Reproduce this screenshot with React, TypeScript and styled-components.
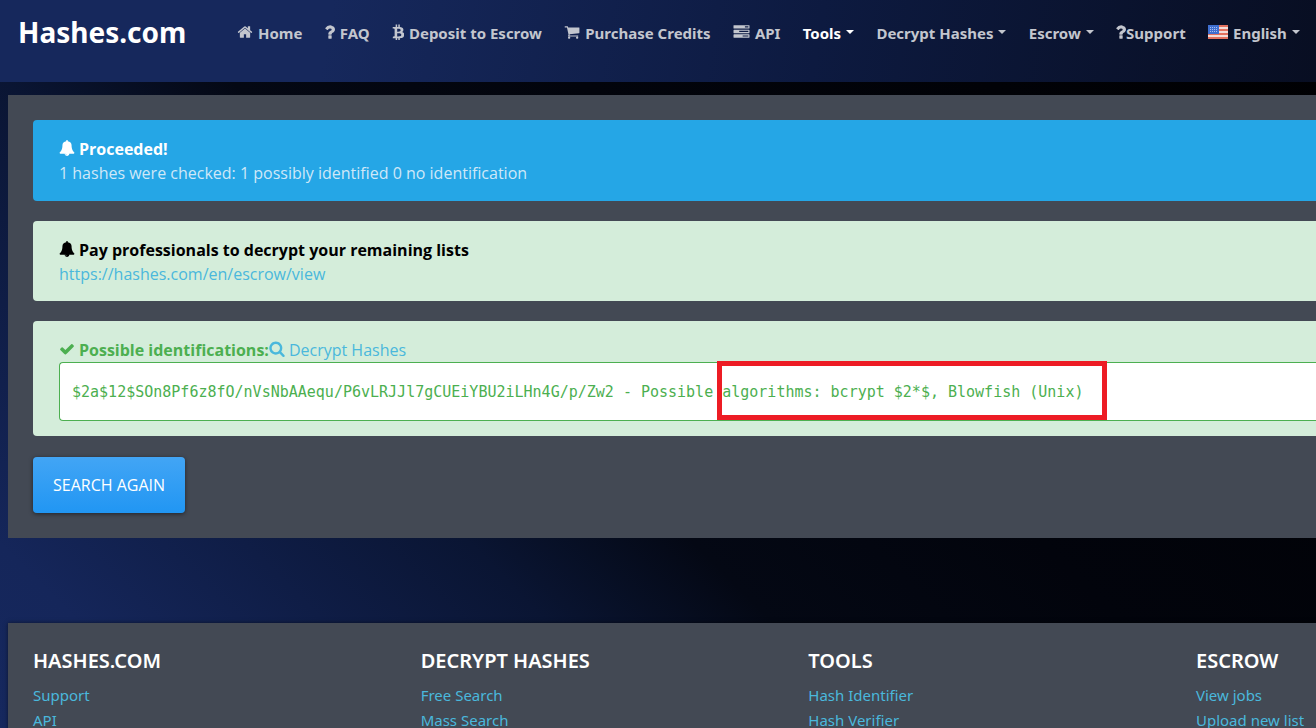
import React from "react";
import styled, { createGlobalStyle } from "styled-components";

const GlobalStyle = createGlobalStyle`
  * { box-sizing: border-box; }
  html { background: #02040b; }
  body {
    margin: 0;
    height: 100vh;
    overflow: hidden;
    font-family: "Noto Sans", "Open Sans", sans-serif;
    font-size: 15px;
    line-height: 24px;
    color: #cfe8f8;
    background: linear-gradient(45deg, #16285e 0%, #15265a 9%, #0f1d46 21%, #0a1533 32%, #040814 43%, #02040c 60%, #000002 100%);
  }
  a { color: #4ab8dc; text-decoration: none; }
`;

const Header = styled.header`
  display: flex;
  align-items: flex-start;
  height: 82px;
  padding: 8px 16px 0 18px;
  background: linear-gradient(100deg, #16285c 0%, #16285c 25%, #0d1a40 62%, #080e22 100%);
`;

const Brand = styled.a`
  && { color: #fff; }
  flex: none;
  width: 219px;
  font-size: 28px;
  font-weight: 700;
  line-height: 48px;
`;

const Nav = styled.nav`
  display: flex;
  flex: 1;
  justify-content: space-between;
  padding-top: 13px;
`;

const NavLink = styled.a<{ $active?: boolean; $tight?: boolean }>`
  && { color: ${(p) => (p.$active ? "#fff" : "#c3c6ce")}; }
  display: flex;
  align-items: center;
  gap: ${(p) => (p.$tight ? "0" : "5px")};
  font-weight: 700;
  white-space: nowrap;
`;

const Caret = styled.span`
  margin-bottom: 2px;
  border: 4px solid transparent;
  border-top-color: currentColor;
  border-bottom: 0;
`;

const Glyph = styled.svg`
  flex: none;
  height: 16px;
  margin-bottom: 2px;
  fill: currentColor;
`;

const FlagImage = styled.svg`
  flex: none;
  width: 20px;
  height: 14px;
  margin-bottom: 2px;
`;

const Panel = styled.main`
  margin: 13px 0 0 8px;
  padding: 25px 0 25px 25px;
  background: #434954;
`;

const Alert = styled.section<{ $tone: "info" | "success" }>`
  margin-bottom: 20px;
  padding: ${(p) => (p.$tone === "info" ? "17px 0 16px 26px" : "17px 0 15px 26px")};
  border-radius: 4px 0 0 4px;
  background: ${(p) => (p.$tone === "info" ? "#25a6e6" : "#d4edda")};
  font-family: "Open Sans", sans-serif;
  font-size: 16px;
`;

const AlertTitle = styled.h2<{ $color: string }>`
  display: flex;
  align-items: center;
  margin: 0;
  color: ${(p) => p.$color};
  font-size: 16px;
  font-weight: 700;
  line-height: 24px;
  svg { margin-right: 4px; }
  a { display: flex; align-items: center; font-weight: 400; }
`;

const AlertText = styled.p`
  margin: 0;
`;

const Result = styled.div`
  position: relative;
  height: 59px;
  padding: 0 12px;
  border: 1px solid #4caf50;
  border-right: 0;
  border-radius: 4px 0 0 4px;
  background: #fff;
  color: #4caf50;
  font-family: "DejaVu Sans Mono", monospace;
  font-size: 15px;
  line-height: 59px;
  white-space: pre;
`;

const Marker = styled.span`
  position: absolute;
  top: -2px;
  left: 657px;
  width: 390px;
  height: 59px;
  border: 5px solid #ed1c24;
`;

const SearchButton = styled.button`
  display: block;
  height: 56px;
  margin-top: 21px;
  padding: 0 20px;
  border: 0;
  border-radius: 4px;
  background: linear-gradient(#42a5f5, #2196f3);
  box-shadow: 0 1px 4px rgba(0, 0, 0, 0.5);
  color: #fff;
  font: 400 16px/24px "Open Sans", sans-serif;
`;

const Footer = styled.footer`
  display: grid;
  grid-template-columns: repeat(3, 1fr) 120px;
  margin: 85px 0 0 8px;
  padding: 25px 0 25px 25px;
  background: #434954;
  box-shadow: 0 0 4px rgba(0, 0, 0, 0.5);
`;

const FooterTitle = styled.h3`
  margin: 0 0 10px;
  color: #fff;
  font-size: 20px;
  font-weight: 600;
  line-height: 25px;
  white-space: nowrap;
`;

const FooterList = styled.ul`
  margin: 0;
  padding: 0;
  list-style: none;
  line-height: 25px;
  white-space: nowrap;
`;

const icons = {
  home: { box: "0 0 1792 1792", width: 16, d: "M1472 992v480q0 26-19 45t-45 19h-384v-384h-256v384h-384q-26 0-45-19t-19-45v-480q0-1 .5-3t.5-3l575-474 575 474q1 2 1 6zm223-69l-62 74q-8 9-21 11h-3q-13 0-21-7l-692-577-692 577q-12 8-24 7-13-2-21-11l-62-74q-8-10-7-23.5t11-21.5l719-599q32-26 76-26t76 26l244 204v-195q0-14 9-23t23-9h192q14 0 23 9t9 23v408l219 182q10 8 11 21.5t-7 23.5z" },
  question: { box: "448 128 960 1536", width: 10, d: "M1088 1256v240q0 16-12 28t-28 12h-240q-16 0-28-12t-12-28v-240q0-16 12-28t28-12h240q16 0 28 12t12 28zm316-600q0 54-15.5 101t-35 76.5-55 59.5-57.5 43.5-61 35.5q-41 23-68.5 65t-27.5 67q0 17-12 32.5t-28 15.5h-240q-15 0-25.5-18.5t-10.5-37.5v-45q0-83 65-156.5t143-108.5q59-27 84-56t25-76q0-42-46.5-74t-107.5-32q-65 0-108 29-35 25-107 115-13 16-31 16-12 0-25-8l-164-125q-13-10-15.5-25t5.5-28q160-266 464-266 80 0 161 31t146 83 106 127.5 41 158.5z" },
  bitcoin: { box: "0 64 1216 1664", width: 12, d: "M1167 640q18 182-131 258 117 28 175 103t45 214q-7 71-32.5 125t-64.5 89-97 58.5-121.5 34.5-145.5 15v255h-154v-251q-80 0-122-1v252h-154v-255q-18 0-54-.5t-55-.5h-200l31-183h111q50 0 58-51v-402h16q-6-1-16-1v-287q-13-68-89-68h-111v-164l212 1q64 0 97-1v-252h154v247q82-2 122-2v-245h154v252q79 7 140 22.5t113 45 82.5 78 36.5 114.5zm-215 545q0-36-15-64t-37-46-57.5-30.5-65.5-18.5-74-9-69-3-64.5 1-47.5 1v338q8 0 37 .5t48 .5 53-1.5 58.5-4 57-8.5 55.5-14 47.5-21 39.5-30 24.5-40 9.5-51zm-71-476q0-33-12.5-58.5t-30.5-42-48-28-55-16.5-61.5-8-58-2.5-54 1-39.5.5v307q5 0 34.5.5t46.5 0 50-2 55-5.5 51.5-11 48.5-18.5 37-27 27-38.5 9-51z" },
  cart: { box: "0 0 1792 1792", width: 16, d: "M704 1536q0 52-38 90t-90 38-90-38-38-90 38-90 90-38 90 38 38 90zm896 0q0 52-38 90t-90 38-90-38-38-90 38-90 90-38 90 38 38 90zm128-1088v512q0 24-16.5 42.5t-40.5 21.5l-1044 122q13 60 13 70 0 16-24 64h920q26 0 45 19t19 45-19 45-45 19h-1024q-26 0-45-19t-19-45q0-11 8-31.5t16-36 21.5-40 15.5-29.5l-177-823h-204q-26 0-45-19t-19-45 19-45 45-19h256q16 0 28.5 6.5t19.5 15.5 13 24.5 8 26 5.5 29.5 4.5 26h1201q26 0 45 19t19 45z" },
  tasks: { box: "0 0 1792 1792", width: 17, d: "M1024 1408h640v-128h-640v128zm-384-512h1024v-128h-1024v128zm640-512h384v-128h-384v128zm512 832v256q0 26-19 45t-45 19h-1664q-26 0-45-19t-19-45v-256q0-26 19-45t45-19h1664q26 0 45 19t19 45zm0-512v256q0 26-19 45t-45 19h-1664q-26 0-45-19t-19-45v-256q0-26 19-45t45-19h1664q26 0 45 19t19 45zm0-512v256q0 26-19 45t-45 19h-1664q-26 0-45-19t-19-45v-256q0-26 19-45t45-19h1664q26 0 45 19t19 45z" },
  bell: { box: "0 0 1792 1792", width: 16, d: "M912 1696q0-16-16-16-59 0-101.5-42.5t-42.5-101.5q0-16-16-16t-16 16q0 73 51.5 124.5t124.5 51.5q16 0 16-16zm816-288q0 52-38 90t-90 38h-448q0 106-75 181t-181 75-181-75-75-181h-448q-52 0-90-38t-38-90q50-42 91-88t85-119.5 74.5-158.5 50-206 19.5-260q0-152 117-282.5t307-158.5q-8-19-8-39 0-40 28-68t68-28 68 28 28 68q0 20-8 39 190 28 307 158.5t117 282.5q0 139 19.5 260t50 206 74.5 158.5 85 119.5 91 88z" },
  check: { box: "0 0 1792 1792", width: 16, d: "M1671 566q0 40-28 68l-724 724-136 136q-28 28-68 28t-68-28l-136-136-362-362q-28-28-28-68t28-68l136-136q28-28 68-28t68 28l294 295 656-657q28-28 68-28t68 28l136 136q28 28 28 68z" },
  search: { box: "64 64 1664 1728", width: 16, d: "M1216 832q0-185-131.5-316.5t-316.5-131.5-316.5 131.5-131.5 316.5 131.5 316.5 316.5 131.5 316.5-131.5 131.5-316.5zm512 832q0 52-38 90t-90 38q-54 0-90-38l-343-342q-179 124-399 124-143 0-273.5-55.5t-225-150-150-225-55.5-273.5 55.5-273.5 150-225 225-150 273.5-55.5 273.5 55.5 225 150 150 225 55.5 273.5q0 220-124 399l343 343q37 37 37 90z" },
};

type IconName = keyof typeof icons;

function Icon({ name }: { name: IconName }) {
  const icon = icons[name];
  return (
    <Glyph viewBox={icon.box} width={icon.width} aria-hidden="true">
      <path d={icon.d} />
    </Glyph>
  );
}

function Flag() {
  return (
    <FlagImage viewBox="0 0 20 14" aria-hidden="true">
      <rect width="20" height="14" fill="#f3dcd8" />
      {[0, 4, 8, 12].map((y) => (
        <rect key={y} y={y} width="20" height="2" fill="#e2705e" />
      ))}
      <rect width="11" height="9" fill="#3f6fd0" />
      {[2, 4, 6].map((y) =>
        [2, 4, 6, 8].map((x) => <rect key={`${x}-${y}`} x={x} y={y} width="1" height="1" fill="#a9bdf0" />)
      )}
    </FlagImage>
  );
}

type NavItem = {
  label: string;
  icon?: IconName;
  flag?: boolean;
  menu?: boolean;
  active?: boolean;
  tight?: boolean;
};

const navItems: NavItem[] = [
  { label: "Home", icon: "home" },
  { label: "FAQ", icon: "question" },
  { label: "Deposit to Escrow", icon: "bitcoin" },
  { label: "Purchase Credits", icon: "cart" },
  { label: "API", icon: "tasks" },
  { label: "Tools", menu: true, active: true },
  { label: "Decrypt Hashes", menu: true },
  { label: "Escrow", menu: true },
  { label: "Support", icon: "question", tight: true },
  { label: "English", flag: true, menu: true },
];

const footerColumns = [
  { title: "HASHES.COM", links: ["Support", "API"] },
  { title: "DECRYPT HASHES", links: ["Free Search", "Mass Search"] },
  { title: "TOOLS", links: ["Hash Identifier", "Hash Verifier"] },
  { title: "ESCROW", links: ["View jobs", "Upload new list"] },
];

export default function App() {
  return (
    <>
      <GlobalStyle />
      <Header>
        <Brand href="#">Hashes.com</Brand>
        <Nav>
          {navItems.map((item) => (
            <NavLink key={item.label} href="#" $active={item.active} $tight={item.tight}>
              {item.flag && <Flag />}
              {item.icon && <Icon name={item.icon} />}
              {item.label}
              {item.menu && <Caret />}
            </NavLink>
          ))}
        </Nav>
      </Header>
      <Panel>
        <Alert $tone="info">
          <AlertTitle $color="#fff">
            <Icon name="bell" />
            Proceeded!
          </AlertTitle>
          <AlertText>1 hashes were checked: 1 possibly identified 0 no identification</AlertText>
        </Alert>
        <Alert $tone="success">
          <AlertTitle $color="#000">
            <Icon name="bell" />
            Pay professionals to decrypt your remaining lists
          </AlertTitle>
          <AlertText>
            <a href="#">https://hashes.com/en/escrow/view</a>
          </AlertText>
        </Alert>
        <Alert $tone="success">
          <AlertTitle $color="#4caf50">
            <Icon name="check" />
            Possible identifications:
            <a href="#">
              <Icon name="search" />
              Decrypt Hashes
            </a>
          </AlertTitle>
          <Result>
            $2a$12$SOn8Pf6z8fO/nVsNbAAequ/P6vLRJJl7gCUEiYBU2iLHn4G/p/Zw2 - Possible algorithms: bcrypt $2*$, Blowfish (Unix)
            <Marker />
          </Result>
        </Alert>
        <SearchButton type="button">SEARCH AGAIN</SearchButton>
      </Panel>
      <Footer>
        {footerColumns.map((column) => (
          <div key={column.title}>
            <FooterTitle>{column.title}</FooterTitle>
            <FooterList>
              {column.links.map((link) => (
                <li key={link}>
                  <a href="#">{link}</a>
                </li>
              ))}
            </FooterList>
          </div>
        ))}
      </Footer>
    </>
  );
}
